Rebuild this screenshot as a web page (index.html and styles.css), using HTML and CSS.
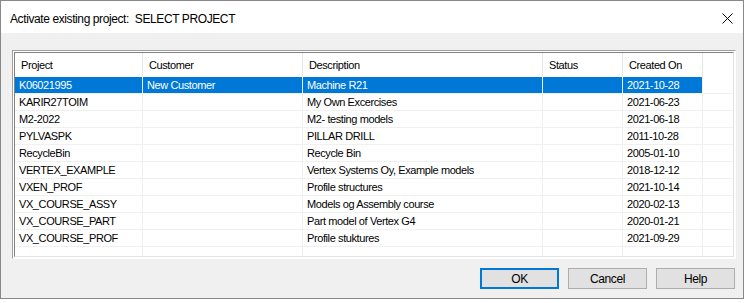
FILE: index.html
```html
<!DOCTYPE html>
<html lang="en">

<head>
    <meta charset="UTF-8">
    <title>Activate existing project</title>
    <link rel="stylesheet" href="styles.css">
</head>

<body>
    <div class="dialog">
        <div class="titlebar">
            <span class="title">Activate existing project:&nbsp; SELECT PROJECT</span>
            <span class="close">
                <svg width="11" height="11" viewBox="0 0 11 11">
                    <path d="M0.5 0.5 L10.5 10.5 M10.5 0.5 L0.5 10.5" stroke="#000" stroke-width="1" fill="none"/>
                </svg>
            </span>
        </div>

        <div class="content">
            <div class="listview">
                <div class="inner">
                    <div class="row header">
                        <span>Project</span>
                        <span>Customer</span>
                        <span>Description</span>
                        <span>Status</span>
                        <span>Created On</span>
                        <span></span>
                    </div>
                    <div class="row selected">
                        <span>K06021995</span>
                        <span>New Customer</span>
                        <span>Machine R21</span>
                        <span></span>
                        <span>2021-10-28</span>
                        <span class="filler"></span>
                    </div>
                    <div class="row">
                        <span>KARIR27TOIM</span>
                        <span></span>
                        <span>My Own Excercises</span>
                        <span></span>
                        <span>2021-06-23</span>
                        <span></span>
                    </div>
                    <div class="row">
                        <span>M2-2022</span>
                        <span></span>
                        <span>M2- testing models</span>
                        <span></span>
                        <span>2021-06-18</span>
                        <span></span>
                    </div>
                    <div class="row">
                        <span>PYLVASPK</span>
                        <span></span>
                        <span>PILLAR DRILL</span>
                        <span></span>
                        <span>2011-10-28</span>
                        <span></span>
                    </div>
                    <div class="row">
                        <span>RecycleBin</span>
                        <span></span>
                        <span>Recycle Bin</span>
                        <span></span>
                        <span>2005-01-10</span>
                        <span></span>
                    </div>
                    <div class="row">
                        <span>VERTEX_EXAMPLE</span>
                        <span></span>
                        <span>Vertex Systems Oy, Example models</span>
                        <span></span>
                        <span>2018-12-12</span>
                        <span></span>
                    </div>
                    <div class="row">
                        <span>VXEN_PROF</span>
                        <span></span>
                        <span>Profile structures</span>
                        <span></span>
                        <span>2021-10-14</span>
                        <span></span>
                    </div>
                    <div class="row">
                        <span>VX_COURSE_ASSY</span>
                        <span></span>
                        <span>Models og Assembly course</span>
                        <span></span>
                        <span>2020-02-13</span>
                        <span></span>
                    </div>
                    <div class="row">
                        <span>VX_COURSE_PART</span>
                        <span></span>
                        <span>Part model of Vertex G4</span>
                        <span></span>
                        <span>2020-01-21</span>
                        <span></span>
                    </div>
                    <div class="row">
                        <span>VX_COURSE_PROF</span>
                        <span></span>
                        <span>Profile stuktures</span>
                        <span></span>
                        <span>2021-09-29</span>
                        <span></span>
                    </div>
                    <div class="row">
                        <span></span>
                        <span></span>
                        <span></span>
                        <span></span>
                        <span></span>
                        <span></span>
                    </div>
                </div>
            </div>

            <div class="buttons">
                <button type="button" class="default">OK</button>
                <button type="button">Cancel</button>
                <button type="button">Help</button>
            </div>
        </div>
    </div>
</body>

</html>
```

FILE: styles.css
```css
body {
    margin: 0;
    background: #fff;
    font-family: "Liberation Sans", Arial, sans-serif;
    font-size: 11px;
    letter-spacing: -0.4px;
    color: #000;
}

.dialog {
    width: 742px;
    height: 297px;
    border: 1px solid #888;
    display: flex;
    flex-direction: column;
}

.titlebar {
    height: 32px;
    background: #fff;
    display: flex;
    align-items: center;
    justify-content: space-between;
    padding: 0 10px 0 9px;
}

.title {
    font-size: 12px;
    padding-top: 3px;
}

.close {
    display: flex;
    padding-top: 2px;
}

.content {
    flex: 1;
    background: #f0f0f0;
    padding: 17px 7px 0 11px;
}

.listview {
    height: 205px;
    padding: 1px;
    background: #fff;
    border: 1px solid #a0a0a0;
    border-right-color: #fff;
    border-bottom-color: #fff;
}

.inner {
    height: 203px;
    border: 1px solid #828282;
    border-right-color: #e3e3e3;
    border-bottom-color: #e3e3e3;
    background: #fff;
    overflow: hidden;
}

.row {
    display: grid;
    grid-template-columns: 128px 160px 240px 80px 80px 1fr;
    height: 16px;
    border-bottom: 1px solid #f0f0f0;
}

.row span {
    border-right: 1px solid #f0f0f0;
    padding-left: 4px;
    line-height: 16px;
    white-space: nowrap;
    overflow: hidden;
}

.row span:last-child {
    border-right: none;
}

.header {
    height: 24px;
    border-bottom: none;
}

.header span {
    line-height: 24px;
    padding-left: 6px;
    border-right-color: #e5e5e5;
}

.selected span {
    background: #0078d7;
    color: #fff;
}

.selected span.filler {
    background: #fff;
}

.buttons {
    display: flex;
    justify-content: flex-end;
    gap: 9px;
    margin-top: 9px;
    padding-right: 1px;
}

button {
    width: 79px;
    height: 21px;
    background: #e1e1e1;
    border: 1px solid #adadad;
    font-family: "Liberation Sans", Arial, sans-serif;
    font-size: 12px;
    letter-spacing: -0.4px;
    color: #000;
    padding: 0;
}

button.default {
    border: 2px solid #0078d7;
}
```
